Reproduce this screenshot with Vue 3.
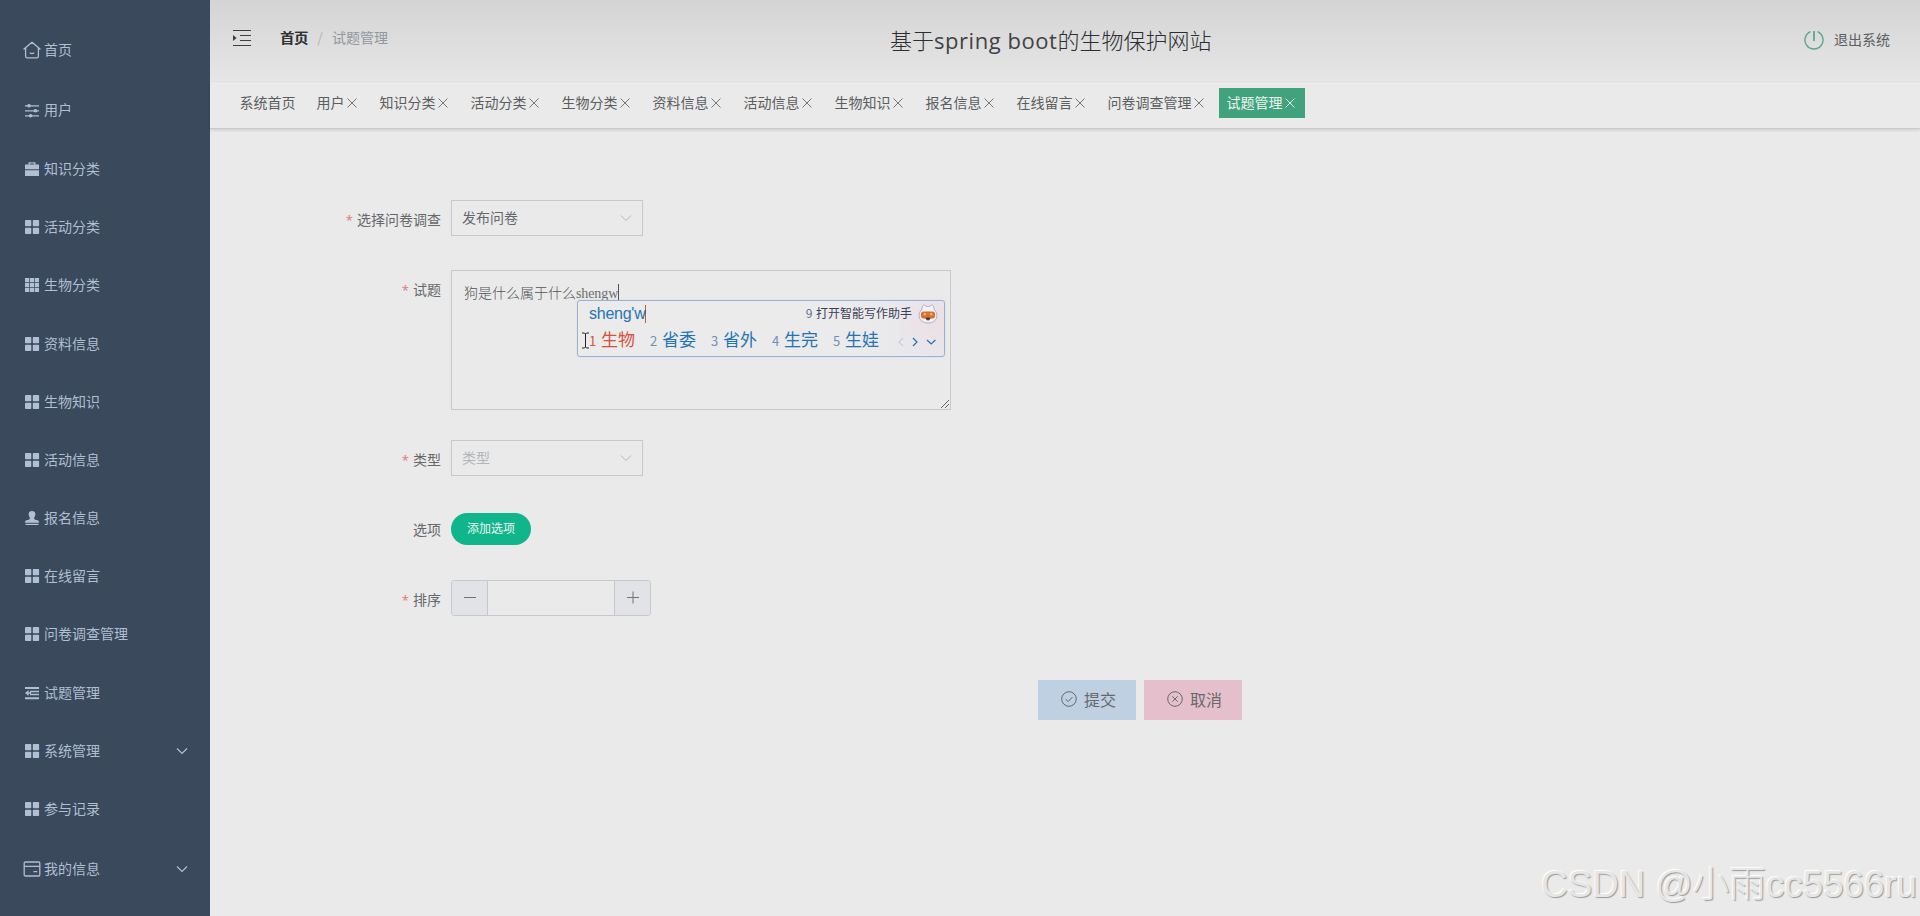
<script setup>
const menu = [
  { t: '首页', i: 'home', c: 'first' },
  { t: '用户', i: 'sliders', c: 'second' },
  { t: '知识分类', i: 'case' },
  { t: '活动分类', i: 'grid4' },
  { t: '生物分类', i: 'grid9' },
  { t: '资料信息', i: 'grid4' },
  { t: '生物知识', i: 'grid4' },
  { t: '活动信息', i: 'grid4' },
  { t: '报名信息', i: 'stamp' },
  { t: '在线留言', i: 'grid4' },
  { t: '问卷调查管理', i: 'grid4' },
  { t: '试题管理', i: 'outdent' },
  { t: '系统管理', i: 'grid4', sub: true },
  { t: '参与记录', i: 'grid4' },
  { t: '我的信息', i: 'card', sub: true, c: 'last' },
]
const tabs = ['系统首页', '用户', '知识分类', '活动分类', '生物分类', '资料信息', '活动信息', '生物知识', '报名信息', '在线留言', '问卷调查管理', '试题管理']
const words = ['生物', '省委', '省外', '生完', '生娃']
</script>

<template>
  <div class="page">
    <aside class="side">
      <div v-for="m in menu" :key="m.t" class="item" :class="m.c">
        <svg class="mi" viewBox="0 0 18 18">
          <g v-if="m.i === 'home'" fill="none" stroke="currentColor" stroke-width="1.3" stroke-linejoin="round" stroke-linecap="round">
            <path d="M1 8L9 1.200L17 8M2.600 7V15.200Q2.600 16.900 4.200 16.900H13.800Q15.400 16.900 15.400 15.200V7" /><path d="M7.200 12Q9 13.200 10.800 12" />
          </g>
          <g v-else-if="m.i === 'sliders'" fill="currentColor">
            <path d="M2 4.200h14v1.200H2zM2 9.200h14v1.200H2zM2 14.200h14v1.200H2z" />
            <circle cx="6" cy="4.800" r="1.800" /><circle cx="12.400" cy="9.800" r="1.800" /><circle cx="7.600" cy="14.800" r="1.800" />
          </g>
          <path v-else-if="m.i === 'case'" fill="currentColor" fill-rule="evenodd" d="M5.500 4.500V2.200h7v2.300H16v4.800H2V4.500zM6.800 4.500h4.400V3.500H6.800zM2 10.200h14V16H2z" />
          <g v-else-if="m.i === 'grid4'" fill="currentColor">
            <rect x="2" y="2" width="6.300" height="6.300" rx=".8" /><rect x="9.800" y="2" width="6.300" height="6.300" rx=".8" />
            <rect x="2" y="9.800" width="6.300" height="6.300" rx=".8" /><rect x="9.800" y="9.800" width="6.300" height="6.300" rx=".8" />
          </g>
          <path v-else-if="m.i === 'grid9'" fill="currentColor" d="M2 2h4.200v4.200H2zM6.900 2h4.200v4.200H6.900zM11.800 2H16v4.200h-4.200zM2 6.900h4.200v4.200H2zM6.900 6.900h4.200v4.200H6.900zM11.800 6.900H16v4.200h-4.200zM2 11.800h4.200V16H2zM6.900 11.800h4.200V16H6.900zM11.800 11.800H16V16h-4.200z" />
          <path v-else-if="m.i === 'stamp'" fill="currentColor" d="M9 2a3.500 3.500 0 0 1 3.400 3.600c0 1.600-1.300 2.500-1.300 4.100 0 .8 1.400 1 3.400 1.500 1 .3 1.500 1 1.500 2.600H2c0-1.600.5-2.300 1.500-2.600 2-.5 3.400-.7 3.400-1.500 0-1.600-1.300-2.500-1.300-4.100A3.500 3.500 0 0 1 9 2zM2.500 14.800h13V16h-13z" />
          <path v-else-if="m.i === 'outdent'" fill="currentColor" d="M2 3h14v2H2zM7 6.800h9v1.500H7zM7 9.800h9v1.500H7zM2 13.200h14v2H2zM2 9l3.600-2.900v5.800zM5 8.300h3v1.500H5z" />
          <g v-else fill="none" stroke="currentColor" stroke-width="1.300"><rect x="1.200" y="2" width="15.600" height="14" rx="1.200" /><path d="M1.200 6.400h15.600M10.500 11.700h3.700" /></g>
        </svg>
        <span>{{ m.t }}</span>
        <svg v-if="m.sub" class="arrow" viewBox="0 0 12 12"><path d="M1 3.500L6 8.500L11 3.500" fill="none" stroke="currentColor" stroke-width="1.200" /></svg>
      </div>
    </aside>

    <div class="content">
      <header class="head">
        <svg class="fold" viewBox="0 0 20 18"><path d="M1 1.500h18M8 6.500h11M8 11.500h11M1 16.500h18" stroke="#3c3f42" stroke-width="1.100" /><path d="M1 6l3.600 3L1 12z" fill="#3c3f42" /></svg>
        <nav class="crumb"><b>首页</b><i>/</i><span>试题管理</span></nav>
        <h1>基于<span>spring boot</span>的生物保护网站</h1>
        <div class="exit">
          <svg viewBox="0 0 20 20"><path d="M6.500 1.700A9 9 0 1 0 13.500 1.700" fill="none" stroke="#5fa68c" stroke-width="1.400" /><path d="M10 1v10" stroke="#5fa68c" stroke-width="1.800" /></svg>
          <span>退出系统</span>
        </div>
      </header>

      <div class="tabs">
        <div v-for="(t, n) in tabs" :key="t" class="tab" :class="{ on: n === 11 }">
          <span>{{ t }}</span>
          <svg v-if="n" viewBox="0 0 14 14"><path d="M2.500 2.500l9 9M11.500 2.500l-9 9" fill="none" stroke="currentColor" stroke-width="1" /></svg>
        </div>
      </div>

      <main class="form">
        <div class="row">
          <label><em>*</em>选择问卷调查</label>
          <div class="select"><span>发布问卷</span><svg viewBox="0 0 12 12"><path d="M1 3.500L6 8.500L11 3.500" fill="none" stroke="currentColor" /></svg></div>
        </div>
        <div class="row">
          <label><em>*</em>试题</label>
          <div class="area">
            <span class="typed">狗是什么属于什么<span class="latin">shengw</span></span>
            <svg class="grip" viewBox="0 0 10 10"><path d="M1 9L9 1M5 9L9 5" stroke="#666" fill="none" /></svg>
            <div class="ime">
              <div class="line top">
                <span class="pinyin">sheng'w</span>
                <span class="help"><i>9</i> 打开智能写作助手</span>
                <svg class="mascot" viewBox="0 0 20 20">
                  <path d="M4 5Q4 .8 6.500 1Q8 1.200 8.300 2.500H11.700Q12 1.200 13.500 1Q16 .8 16 5Q19 8 19 12Q18 19 10 19Q2 19 1 12Q1 8 4 5Z" fill="#f5f2f4" stroke="#9aa5cb" stroke-width=".8" />
                  <rect x="3" y="7.500" width="14" height="7" rx="2.500" fill="#d9702c" /><rect x="5.500" y="9" width="2.500" height="2.500" rx="1" fill="#f4b27c" /><rect x="12" y="9" width="2.500" height="2.500" rx="1" fill="#f4b27c" /><path d="M7.500 13.500h5q-.5 3-2.500 3t-2.500-3z" fill="#4d3a3c" />
                </svg>
              </div>
              <div class="line words">
                <span v-for="(w, n) in words" :key="w" class="word" :class="{ hot: !n }"><i>{{ n + 1 }}</i>{{ w }}</span>
                <svg class="nav" viewBox="0 0 40 12"><g fill="none" stroke-width="1.200"><path d="M6 2L2 6l4 4" stroke="#cbced3" /><path d="M16 2l4 4l-4 4M30 4l4.200 4L38.400 4" stroke="#2671b4" /></g></svg>
              </div>
              <svg class="ibeam" viewBox="0 0 9 17"><path d="M1 1h2.500l1 1l1-1H8M4.500 2v13M1 16h2.500l1-1l1 1H8" fill="none" stroke="#222" /></svg>
            </div>
          </div>
        </div>
        <div class="row">
          <label><em>*</em>类型</label>
          <div class="select empty"><span>类型</span><svg viewBox="0 0 12 12"><path d="M1 3.500L6 8.500L11 3.500" fill="none" stroke="currentColor" /></svg></div>
        </div>
        <div class="row">
          <label>选项</label>
          <button class="add">添加选项</button>
        </div>
        <div class="row">
          <label><em>*</em>排序</label>
          <div class="num">
            <div><svg viewBox="0 0 14 14"><path d="M1 6.500h12" stroke="currentColor" /></svg></div>
            <p></p>
            <div><svg viewBox="0 0 14 14"><path d="M1 6.500h12M7 .5v12" stroke="currentColor" /></svg></div>
          </div>
        </div>
        <div class="actions">
          <button class="ok"><svg viewBox="0 0 16 16"><g fill="none" stroke="currentColor"><circle cx="8" cy="8" r="7.300" /><path d="M4.700 8.200l2.500 2.400l4.300-4.600" /></g></svg><span>提交</span></button>
          <button class="no"><svg viewBox="0 0 16 16"><g fill="none" stroke="currentColor"><circle cx="8" cy="8" r="7.300" /><path d="M5.300 5.300l5.400 5.400M10.700 5.300l-5.400 5.400" /></g></svg><span>取消</span></button>
        </div>
      </main>
      <div class="mark">CSDN @小雨cc5566ru</div>
    </div>
  </div>
</template>

<style>
body { margin: 0; overflow: hidden; }
</style>
<style scoped>
* { box-sizing: border-box; }
svg { display: block; flex: none; }
i, em { font-style: normal; }
.page { display: flex; height: 916px; background: #eaeaea; font: 400 14px "Noto Sans CJK SC", sans-serif; color: #66686a; overflow: hidden; }
.side { width: 210px; flex: none; background: #3a495b; padding-top: 19.900px; color: #b0bfd3; }
.item { height: 58.200px; display: flex; align-items: center; padding: 0 22px 0 23px; white-space: nowrap; }
.item.first { height: 59.200px; }
.item.second { height: 59.800px; }
.item.last { height: 61.800px; }
.mi { width: 18px; height: 18px; margin-right: 3px; position: relative; top: 1px; }
.item span { line-height: 20px; }
.arrow { width: 12px; height: 12px; margin-left: auto; position: relative; top: 1px; }
.content { flex: 1; position: relative; }
.head { height: 82px; background: linear-gradient(#d4d4d4, #e6e6e6); display: flex; position: relative; border-bottom: 1px solid #e1e1e1; }
.fold { width: 20px; height: 18px; margin: 29px 0 0 22px; }
.crumb { display: flex; margin: 27px 0 0 28px; line-height: 20px; height: 20px; }
.crumb b { color: #303336; font-weight: 500; text-shadow: .4px 0 #303336; }
.crumb i { width: 24px; text-align: center; color: #b0b5bb; }
.crumb span { color: #92989f; }
h1 { position: absolute; left: 680px; top: 23px; margin: 0; font-size: 22px; line-height: 32px; font-weight: 300; color: #2c2e30; white-space: nowrap; }
h1 span { font-family: "Open Sans", sans-serif; font-weight: 400; letter-spacing: .55px; color: #414345; }
.exit { margin: 29px 30px 0 auto; height: 20px; display: flex; align-items: center; gap: 9px; color: #5c5e61; }
.exit svg { width: 20px; height: 20px; position: relative; left: -1px; top: 1px; }
.tabs { height: 47px; display: flex; gap: 5px; padding: 6px 0 0 22px; border-bottom: 1px solid #cacaca; box-shadow: 0 1px 3px #0002; color: #5b5d5f; }
.tab { height: 30px; padding: 0 8px; display: flex; align-items: center; white-space: nowrap; }
.tab span { position: relative; top: -1px; left: -.5px; }
.tab svg { width: 14px; height: 14px; color: #777; }
.tab.on { background: #41a37d; color: #eef5f0; }
.tab.on svg { color: #e2efe9; }
.form { padding: 71px 0 0; }
.row { display: flex; align-items: flex-start; margin-bottom: 34px; }
.row:nth-child(2) { margin-bottom: 30px; }
label { width: 231px; margin-right: 10px; text-align: right; line-height: 38px; height: 36px; }
label em { color: #e27476; margin-right: 4px; font-family: "Open Sans", sans-serif; font-size: 13px; }
.select { width: 192px; height: 36px; border: 1px solid #c5c8cc; display: flex; align-items: center; justify-content: space-between; padding: 0 11px 2px 10px; }
.select svg { width: 12px; height: 12px; color: #b4b8be; position: relative; left: .5px; top: .5px; }
.empty span { color: #b2b5bc; }
.area { position: relative; width: 500px; height: 140px; border: 1px solid #c5c8cc; padding: 11px 12px; }
.typed { display: inline-block; height: 16px; line-height: 17px; border-right: 1px solid #555; font-weight: 300; color: #505254; }
.latin { font-family: "Liberation Serif", serif; letter-spacing: -.1px; color: #6c6e70; }
.grip { position: absolute; right: 0; bottom: 0; width: 10px; height: 10px; }
.ime { position: absolute; left: 125px; top: 29px; width: 368px; height: 57px; border: 1px solid #9db1d0; border-radius: 3px; background: radial-gradient(circle at 98% 30%, #eddfe3, transparent 46px), linear-gradient(90deg, #ebebeb 75%, #e7e7ed); color: #2474b5; box-shadow: 0 0 2px #8ea5c540; }
.line { display: flex; align-items: center; }
.top { height: 25px; padding: 0 6px 0 11px; }
.pinyin { font: 16px/18px "Liberation Sans", sans-serif; letter-spacing: -.25px; border-right: 1.500px solid #d2533b; }
.help { margin-left: auto; font-size: 12px; line-height: 20px; position: relative; top: -.5px; color: #3b4056; margin-right: 6px; white-space: nowrap; }
.help i { color: #666e82; margin-right: 1px; }
.mascot { width: 20px; height: 20px; }
.words { height: 28px; padding-left: 11px; white-space: nowrap; }
.word { width: 61px; font-size: 17px; line-height: 24px; display: flex; align-items: baseline; }
.word i { font-size: 13px; width: 12px; color: #6c91b9; }
.hot, .hot i { color: #d4523d; }
.nav { width: 40px; height: 12px; position: relative; left: 3px; top: 2px; }
.ibeam { position: absolute; width: 9px; height: 17px; left: 3px; top: 31px; }
.add { margin-top: 3px; width: 80px; height: 32px; margin-bottom: 1px; border: 0; border-radius: 16px; background: #10b58b; color: #eef8f3; font: 12px "Noto Sans CJK SC", sans-serif; padding: 0 0 3px; }
.num { display: flex; width: 200px; height: 36px; border: 1px solid #c5c8cc; border-radius: 3px; overflow: hidden; color: #707276; }
.num div { width: 35px; background: #e2e3e7; display: flex; align-items: center; justify-content: center; }
.num svg { width: 14px; height: 14px; }
.num p { flex: 1; margin: 0; border: solid #c5c8cc; border-width: 0 1px; }
.actions { display: flex; gap: 8px; margin: 64px 0 0 828px; }
.actions button { width: 98px; height: 40px; border: 0; padding: 0 0 2px 3px; display: flex; align-items: center; justify-content: center; gap: 7px; font: 400 16px "Noto Sans CJK SC", sans-serif; color: #66686c; }
.actions svg { width: 16px; height: 16px; }
.ok { background: #bfd0e3; }
.no { background: #e5c0cc; }
.mark { position: absolute; right: 3px; bottom: 7px; font: 36.700px/48px "Liberation Sans", "Noto Sans CJK SC", sans-serif; font-weight: 300; color: #e6e6e6; text-shadow: 1px 1px 1px #999, -1px -1px 1px #fff; white-space: nowrap; }
</style>
